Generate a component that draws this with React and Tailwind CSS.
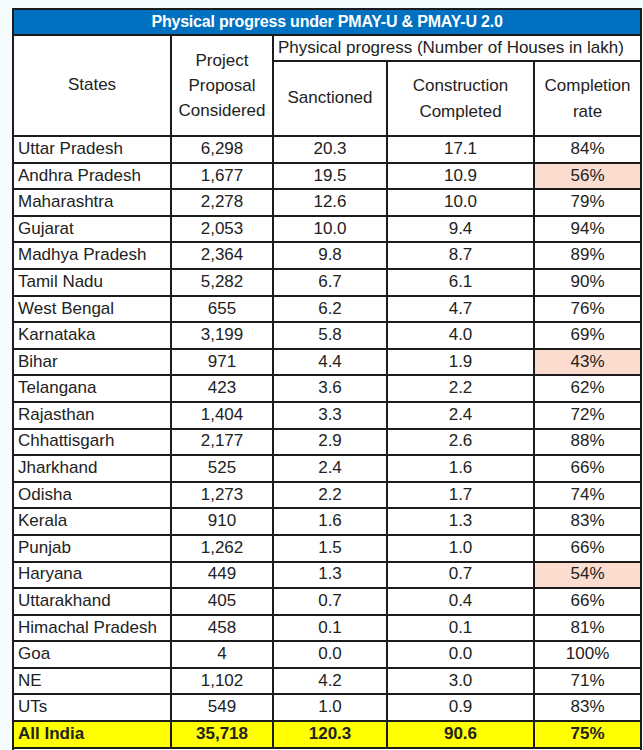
const rows = [
  ['Uttar Pradesh', '6,298', '20.3', '17.1', '84%'],
  ['Andhra Pradesh', '1,677', '19.5', '10.9', '56%', true],
  ['Maharashtra', '2,278', '12.6', '10.0', '79%'],
  ['Gujarat', '2,053', '10.0', '9.4', '94%'],
  ['Madhya Pradesh', '2,364', '9.8', '8.7', '89%'],
  ['Tamil Nadu', '5,282', '6.7', '6.1', '90%'],
  ['West Bengal', '655', '6.2', '4.7', '76%'],
  ['Karnataka', '3,199', '5.8', '4.0', '69%'],
  ['Bihar', '971', '4.4', '1.9', '43%', true],
  ['Telangana', '423', '3.6', '2.2', '62%'],
  ['Rajasthan', '1,404', '3.3', '2.4', '72%'],
  ['Chhattisgarh', '2,177', '2.9', '2.6', '88%'],
  ['Jharkhand', '525', '2.4', '1.6', '66%'],
  ['Odisha', '1,273', '2.2', '1.7', '74%'],
  ['Kerala', '910', '1.6', '1.3', '83%'],
  ['Punjab', '1,262', '1.5', '1.0', '66%'],
  ['Haryana', '449', '1.3', '0.7', '54%', true],
  ['Uttarakhand', '405', '0.7', '0.4', '66%'],
  ['Himachal Pradesh', '458', '0.1', '0.1', '81%'],
  ['Goa', '4', '0.0', '0.0', '100%'],
  ['NE', '1,102', '4.2', '3.0', '71%'],
  ['UTs', '549', '1.0', '0.9', '83%'],
];

const cell = 'border-2 border-[#1c1c1c] px-1';

export default function App() {
  return (
    <div className="h-[750px] overflow-hidden bg-[#f4fbfd] pl-[12px] pt-[8px] font-['Liberation_Sans',Arial,sans-serif] text-[17px] leading-[1.1] text-[#222]">
      <table className="w-[628px] table-fixed border-collapse bg-white">
        <colgroup>
          <col className="w-[158px]" />
          <col className="w-[102px]" />
          <col className="w-[114px]" />
          <col className="w-[147px]" />
          <col className="w-[107px]" />
        </colgroup>
        <thead>
          <tr className="h-[26px]">
            <th colSpan={5} className={`${cell} bg-[#0070c0] text-[16px] font-bold tracking-[-0.2px] text-white`}>
              Physical progress under PMAY-U &amp; PMAY-U 2.0
            </th>
          </tr>
          <tr className="h-[26px]">
            <th rowSpan={2} className={`${cell} font-normal`}>States</th>
            <th rowSpan={2} className={`${cell} font-normal leading-[25px]`}>
              Project
              <br />
              Proposal
              <br />
              Considered
            </th>
            <th colSpan={3} className={`${cell} whitespace-nowrap px-0.5 text-left font-normal`}>
              Physical progress (Number of Houses in lakh)
            </th>
          </tr>
          <tr className="h-[75px]">
            <th className={`${cell} font-normal`}>Sanctioned</th>
            <th className={`${cell} font-normal leading-[26px]`}>
              Construction
              <br />
              Completed
            </th>
            <th className={`${cell} font-normal leading-[26px]`}>
              Completion
              <br />
              rate
            </th>
          </tr>
        </thead>
        <tbody>
          {rows.map(([state, proposals, sanctioned, completed, rate, low]) => (
            <tr key={state} className="h-[26.6px]">
              <td className={`${cell} text-left`}>{state}</td>
              <td className={`${cell} text-center`}>{proposals}</td>
              <td className={`${cell} text-center`}>{sanctioned}</td>
              <td className={`${cell} text-center`}>{completed}</td>
              <td className={`${cell} text-center ${low ? 'bg-[#fbdccf]' : ''}`}>{rate}</td>
            </tr>
          ))}
          <tr className="h-[26.6px] bg-[#ffff00] font-bold">
            <td className={`${cell} text-left`}>All India</td>
            <td className={`${cell} text-center`}>35,718</td>
            <td className={`${cell} text-center`}>120.3</td>
            <td className={`${cell} text-center`}>90.6</td>
            <td className={`${cell} text-center`}>75%</td>
          </tr>
          <tr className="h-[26.6px]">
            <td colSpan={5} className={cell}></td>
          </tr>
        </tbody>
      </table>
    </div>
  );
}
